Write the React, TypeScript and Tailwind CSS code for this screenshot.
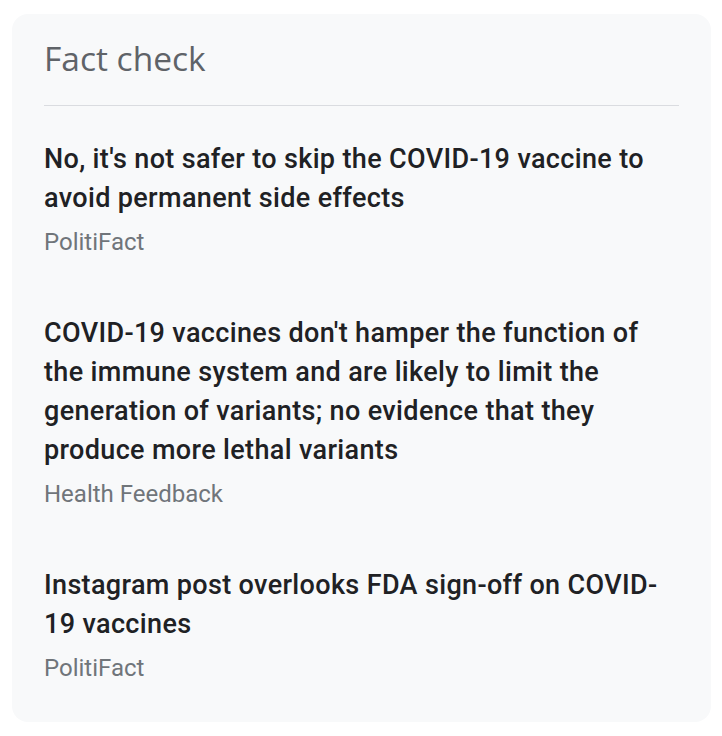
import React from 'react';

const items = [
  {
    title: "No, it's not safer to skip the COVID-19 vaccine to avoid permanent side effects",
    source: 'PolitiFact',
  },
  {
    title:
      "COVID-19 vaccines don't hamper the function of the immune system and are likely to limit the generation of variants; no evidence that they produce more lethal variants",
    source: 'Health Feedback',
  },
  {
    title: 'Instagram post overlooks FDA sign-off on COVID-19 vaccines',
    source: 'PolitiFact',
  },
];

export default function App() {
  return (
    <div className="min-h-screen bg-white pl-[12px] pt-[14px]">
      <div className="w-[699px] h-[708px] rounded-[16px] bg-[#f8f9fa] px-[32px] pt-[24px]">
        <h2
          className="text-[33.5px] leading-[40px] text-[#5f6368] pb-[27px] border-b border-[#dadce0]"
          style={{ fontFamily: '"Open Sans", Roboto, sans-serif' }}
        >
          Fact check
        </h2>
        <div className="flex flex-col gap-[56px] pt-[34px]" style={{ fontFamily: 'Roboto, "Liberation Sans", sans-serif' }}>
          {items.map((item) => (
            <div key={item.title + item.source}>
              <div className="text-[27px] leading-[39px] tracking-[0.35px] font-medium text-[#202124]">{item.title}</div>
              <div className="text-[24px] leading-[32px] mt-[8px] text-[#70757a]">{item.source}</div>
            </div>
          ))}
        </div>
      </div>
    </div>
  );
}
